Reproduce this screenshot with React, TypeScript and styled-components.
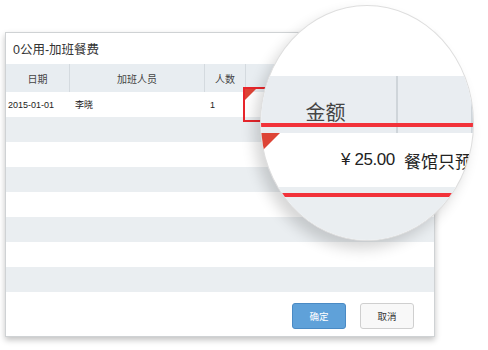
import React from 'react'
import styled, { createGlobalStyle } from 'styled-components'

const GlobalStyle = createGlobalStyle`
  html, body {
    margin: 0;
    padding: 0;
    background: #ffffff;
  }
  body {
    font-family: 'Liberation Sans', 'Noto Sans CJK SC', sans-serif;
    color: #333;
  }
`

const S = {
  Stage: styled.div`
    position: relative;
    width: 488px;
    height: 350px;
    padding: 32px 0 0 5px;
    box-sizing: border-box;
    overflow: hidden;
  `,
  Dialog: styled.div`
    width: 430px;
    height: 305px;
    box-sizing: border-box;
    border: 1px solid #cfd2d4;
    background: #fff;
    display: flex;
    flex-direction: column;
    box-shadow: 0 3px 6px rgba(0, 0, 0, 0.24);
  `,
  Title: styled.div`
    height: 31px;
    display: flex;
    align-items: center;
    padding-left: 7px;
    font-size: 12.5px;
    color: #333;
  `,
  Table: styled.div`
    display: flex;
    flex-direction: column;
  `,
  HeaderRow: styled.div`
    display: grid;
    grid-template-columns: 64px 135px 41px 1fr;
    height: 28px;
    background: #e8edf1;
  `,
  HeaderCell: styled.div`
    display: flex;
    align-items: center;
    justify-content: center;
    font-size: 10px;
    color: #444;
    border-right: 1px solid #d4dadf;
    &:last-child {
      border-right: none;
    }
  `,
  Row: styled.div<{ $striped?: boolean }>`
    display: grid;
    grid-template-columns: 64px 135px 41px 1fr;
    height: 25px;
    background: ${({ $striped }) => ($striped ? '#eaeef1' : '#fff')};
  `,
  Cell: styled.div<{ $pad?: number }>`
    display: flex;
    align-items: center;
    padding-left: ${({ $pad }) => $pad ?? 2}px;
    font-size: 9px;
    color: #222;
  `,
  Footer: styled.div`
    display: flex;
    justify-content: flex-end;
    gap: 14px;
    padding: 11px 20px 0 0;
  `,
  Button: styled.button<{ $primary?: boolean }>`
    width: 54px;
    height: 26px;
    border-radius: 3px;
    font-family: inherit;
    font-size: 9.5px;
    padding: 0;
    border: 1px solid ${({ $primary }) => ($primary ? '#4a8ac4' : '#cfcfcf')};
    background: ${({ $primary }) => ($primary ? '#5fa1d9' : '#f8f8f8')};
    color: ${({ $primary }) => ($primary ? '#fff' : '#333')};
  `,
  Highlight: styled.div`
    position: absolute;
    left: 243px;
    top: 87px;
    width: 30px;
    height: 35px;
    box-sizing: border-box;
    border: 2px solid #e8262c;
  `,
  Corner: styled.div<{ $size: number }>`
    position: absolute;
    left: 0;
    top: 0;
    width: 0;
    height: 0;
    border-top: ${({ $size }) => $size}px solid #dd4436;
    border-right: ${({ $size }) => $size}px solid transparent;
  `,
  Lens: styled.div`
    position: absolute;
    left: 260px;
    top: 5px;
    width: 214px;
    height: 236px;
    border-radius: 50%;
    overflow: hidden;
    background: #fff;
    border: 1px solid #dedede;
    box-sizing: border-box;
    box-shadow: -6px 8px 14px rgba(0, 0, 0, 0.16);
    display: flex;
    flex-direction: column;
  `,
  LensTop: styled.div`
    height: 70px;
    flex: none;
  `,
  LensHeader: styled.div`
    position: relative;
    display: grid;
    grid-template-columns: 137px 1fr;
    height: 57px;
    flex: none;
    background: #e9edf1;
  `,
  LensHeaderCell: styled.div`
    display: flex;
    justify-content: center;
    padding-top: 21px;
    padding-right: 6px;
    font-size: 20px;
    color: #444;
    border-right: 2px solid #cfd5da;
    &:last-child {
      border-right: none;
    }
  `,
  RedRule: styled.div<{ $top: number }>`
    position: absolute;
    left: 0;
    right: 0;
    top: ${({ $top }) => $top}px;
    height: 4px;
    background: #f2323a;
  `,
  LensRow: styled.div`
    position: relative;
    height: 54px;
    flex: none;
    display: flex;
    align-items: center;
    padding-left: 80px;
    font-size: 17px;
    color: #222;
    white-space: nowrap;
  `,
  Amount: styled.span`
    margin-right: 9px;
    letter-spacing: -0.4px;
  `,
  LensStripe: styled.div`
    position: relative;
    flex: 1;
    background: #eaeef1;
  `,
}

const rows = Array.from({ length: 8 }, (_, i) => i)

const App = () => {
  return (
    <>
      <GlobalStyle />
      <S.Stage>
        <S.Dialog>
          <S.Title>0公用-加班餐费</S.Title>
          <S.Table>
            <S.HeaderRow>
              <S.HeaderCell>日期</S.HeaderCell>
              <S.HeaderCell>加班人员</S.HeaderCell>
              <S.HeaderCell>人数</S.HeaderCell>
              <S.HeaderCell>金额</S.HeaderCell>
            </S.HeaderRow>
            {rows.map((i) =>
              i === 0 ? (
                <S.Row key={i}>
                  <S.Cell $pad={2}>2015-01-01</S.Cell>
                  <S.Cell $pad={5}>李晓</S.Cell>
                  <S.Cell $pad={5}>1</S.Cell>
                  <S.Cell />
                </S.Row>
              ) : (
                <S.Row key={i} $striped={i % 2 === 1} />
              ),
            )}
          </S.Table>
          <S.Footer>
            <S.Button $primary>确定</S.Button>
            <S.Button>取消</S.Button>
          </S.Footer>
        </S.Dialog>

        <S.Highlight>
          <S.Corner $size={11} />
        </S.Highlight>

        <S.Lens>
          <S.LensTop />
          <S.LensHeader>
            <S.LensHeaderCell>金额</S.LensHeaderCell>
            <S.LensHeaderCell />
            <S.RedRule $top={47} />
          </S.LensHeader>
          <S.LensRow>
            <S.Corner $size={19} />
            <S.Amount>¥ 25.00</S.Amount>
            餐馆只预订
          </S.LensRow>
          <S.LensStripe>
            <S.RedRule $top={6} />
          </S.LensStripe>
        </S.Lens>
      </S.Stage>
    </>
  )
}

export default App
